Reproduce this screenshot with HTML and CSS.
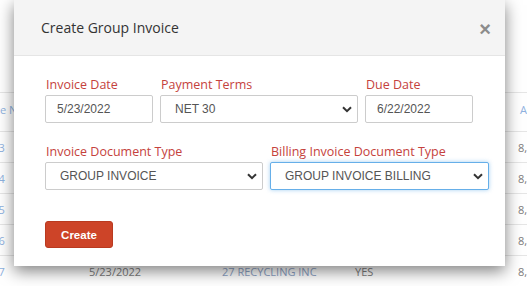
FILE: index.html
```html
<!DOCTYPE html>
<html lang="en">
<head>
    <meta charset="UTF-8">
    <meta name="viewport" content="width=device-width, initial-scale=1.0">
    <title>Create Group Invoice</title>
    <link rel="stylesheet" href="styles.css">
</head>
<body>
    <div class="invoice-table">
        <div class="row head">
            <span class="link">Invoice No</span>
            <span class="link">Invoice Date</span>
            <span class="link">Customer</span>
            <span class="link">Group</span>
            <span class="link">Amount</span>
        </div>
        <div class="row">
            <span class="link">100003</span>
            <span>5/23/2022</span>
            <span class="link">27 RECYCLING INC</span>
            <span>YES</span>
            <span>8,120.00</span>
        </div>
        <div class="row">
            <span class="link">100004</span>
            <span>5/23/2022</span>
            <span class="link">27 RECYCLING INC</span>
            <span>YES</span>
            <span>8,120.00</span>
        </div>
        <div class="row">
            <span class="link">100005</span>
            <span>5/23/2022</span>
            <span class="link">27 RECYCLING INC</span>
            <span>YES</span>
            <span>8,120.00</span>
        </div>
        <div class="row">
            <span class="link">100006</span>
            <span>5/23/2022</span>
            <span class="link">27 RECYCLING INC</span>
            <span>YES</span>
            <span>8,120.00</span>
        </div>
        <div class="row">
            <span class="link">100007</span>
            <span>5/23/2022</span>
            <span class="link">27 RECYCLING INC</span>
            <span>YES</span>
            <span>8,120.00</span>
        </div>
    </div>

    <div class="modal">
        <div class="modal-header">
            <h4 class="modal-title">Create Group Invoice</h4>
            <button class="close" type="button">&times;</button>
        </div>
        <div class="modal-body">
            <div class="form-row three">
                <div class="field">
                    <label>Invoice Date</label>
                    <input class="control" type="text" value="5/23/2022">
                </div>
                <div class="field">
                    <label>Payment Terms</label>
                    <div class="select-wrap">
                        <select class="control">
                            <option>NET 30</option>
                        </select>
                        <svg class="chevron" width="10" height="7" viewBox="0 0 10 7"><path d="M1 1.2 L5 5.2 L9 1.2" fill="none" stroke="#333" stroke-width="2"/></svg>
                    </div>
                </div>
                <div class="field">
                    <label>Due Date</label>
                    <input class="control" type="text" value="6/22/2022">
                </div>
            </div>
            <div class="form-row two">
                <div class="field">
                    <label>Invoice Document Type</label>
                    <div class="select-wrap">
                        <select class="control">
                            <option>GROUP INVOICE</option>
                        </select>
                        <svg class="chevron" width="10" height="7" viewBox="0 0 10 7"><path d="M1 1.2 L5 5.2 L9 1.2" fill="none" stroke="#333" stroke-width="2"/></svg>
                    </div>
                </div>
                <div class="field">
                    <label>Billing Invoice Document Type</label>
                    <div class="select-wrap">
                        <select class="control focused">
                            <option>GROUP INVOICE BILLING</option>
                        </select>
                        <svg class="chevron" width="10" height="7" viewBox="0 0 10 7"><path d="M1 1.2 L5 5.2 L9 1.2" fill="none" stroke="#333" stroke-width="2"/></svg>
                    </div>
                </div>
            </div>
            <button class="btn-create" type="button">Create</button>
        </div>
    </div>
</body>
</html>
```

FILE: styles.css
```css
body {
    margin: 0;
    padding: 0;
    background: #fff;
    font-family: 'Open Sans', 'Liberation Sans', sans-serif;
    overflow: hidden;
}
.invoice-table {
    padding-top: 92px;
    margin-left: -33px;
    font-size: 11px;
    color: #7d7d7d;
}
.row {
    display: grid;
    grid-template-columns: 122px 133px 133px 163px 200px;
    height: 30px;
    align-items: center;
    border-top: 1px solid #e6e6e6;
    white-space: nowrap;
}
.row.head {
    height: 39px;
    align-items: start;
    padding-top: 9px;
    box-sizing: border-box;
}
.row.head span:first-child {
    padding-left: 3px;
}
.row.head span:last-child {
    padding-left: 2px;
}
.row .link {
    color: #8fb2df;
}
.row span:nth-child(3) {
    color: #8ea3c6;
}
.modal {
    position: absolute;
    left: 14px;
    top: 0;
    width: 491px;
    background: #fff;
    box-shadow: 0 5px 15px rgba(0, 0, 0, 0.5);
}
.modal-header {
    height: 55px;
    display: flex;
    align-items: center;
    justify-content: space-between;
    padding: 0 14px 0 27px;
    background: #f4f4f4;
    border-bottom: 1px solid #e5e5e5;
}
.modal-title {
    margin: 0;
    font-size: 14px;
    font-weight: normal;
    color: #333;
}
.close {
    border: none;
    background: none;
    padding: 0;
    font-family: 'Liberation Sans', sans-serif;
    font-size: 20px;
    font-weight: bold;
    color: #8c8c8c;
    line-height: 1;
    margin-top: 2px;
}
.modal-body {
    padding: 20px 31px 18px;
}
.form-row {
    display: grid;
    column-gap: 7px;
    margin-bottom: 20px;
}
.form-row.three {
    grid-template-columns: 108px 198px 108px;
}
.form-row.two {
    grid-template-columns: 218px 219px;
    margin-bottom: 31px;
}
.field label {
    display: block;
    font-size: 12.5px;
    line-height: 17px;
    color: #c5423d;
    margin-bottom: 2px;
    padding-left: 1px;
    white-space: nowrap;
}
.control {
    display: block;
    width: 100%;
    height: 28px;
    box-sizing: border-box;
    border: 1px solid #cccccc;
    border-radius: 2px;
    background: #fff;
    font-family: 'Liberation Sans', sans-serif;
    font-size: 12px;
    color: #555;
    padding: 0 0 0 11px;
    margin: 0;
    outline: none;
}
select.control {
    appearance: none;
    -webkit-appearance: none;
    padding-left: 14px;
}
.control.focused {
    border-color: #66afe9;
    box-shadow: 0 0 4px rgba(102, 175, 233, 0.6);
}
.select-wrap {
    position: relative;
}
.chevron {
    position: absolute;
    right: 6px;
    top: 11px;
}
.btn-create {
    display: block;
    width: 68px;
    height: 27px;
    border: 1px solid #b93a20;
    border-radius: 3px;
    background: #cd4428;
    color: #fff;
    font-family: 'Liberation Sans', sans-serif;
    font-size: 11.5px;
    font-weight: bold;
    padding: 0;
}
```
